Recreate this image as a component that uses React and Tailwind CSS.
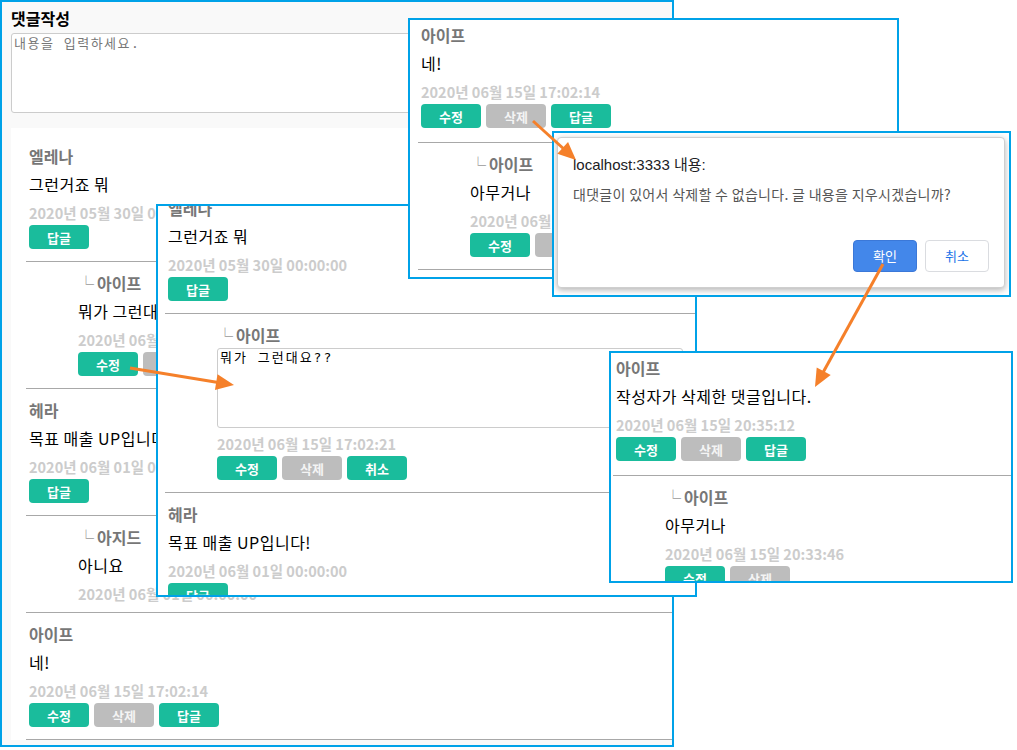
import React from 'react';

// 버튼 (수정 / 삭제 / 답글 / 취소)
const Btn = ({ label, gray }) => (
  <button
    className={`h-[24px] w-[60px] rounded-[4px] text-[13px] font-bold leading-none ${
      gray ? 'bg-[#bdbdbd] text-[#f4f4f4]' : 'bg-[#1abc9c] text-white'
    }`}
  >
    {label}
  </button>
);

// 댓글 한 줄
const Comment = ({ name, text, date, buttons = [], reply, edit, loose }) => {
  const pb = buttons.length ? (loose ? 'pb-[14px]' : 'pb-[12px]') : 'pb-[6px]';
  return (
    <div className={`border-b border-[#a8a8a8] pt-[9px] ${pb}`}>
      <div className={reply ? 'pl-[52px]' : 'pl-[3px]'}>
        <div className="h-[24px] whitespace-nowrap text-[16px] font-bold leading-[24px] text-[#777]">
          {reply && <span className="mr-[3px] font-normal text-[#9a9a9a]">└</span>}
          {name}
        </div>
        {edit ? (
          <textarea
            readOnly
            defaultValue={text}
            className="mt-[1px] block h-[80px] w-[calc(100%-12px)] resize-none rounded-[3px] border border-[#ccc] bg-white px-[2px] py-[1px] font-['DejaVu_Sans_Mono','Noto_Sans_CJK_KR',monospace] text-[13px] leading-[16px] tracking-[2px] text-black outline-none"
          />
        ) : (
          <div className="mt-[2px] whitespace-nowrap text-[16px] leading-[28px] tracking-[0.5px] text-black">{text}</div>
        )}
        <div
          className={`${edit ? 'mt-[4px]' : 'mt-[3px]'} whitespace-nowrap text-[14.5px] font-bold leading-[24px] text-[#cccccc]`}
        >
          {date}
        </div>
        {buttons.length > 0 && (
          <div className="flex gap-[5px]">
            {buttons.map((b) => (
              <Btn key={b} label={b} gray={b === '삭제'} />
            ))}
          </div>
        )}
      </div>
    </div>
  );
};

// 주황색 화살표
const Arrow = ({ x1, y1, x2, y2 }) => {
  const dx = x2 - x1;
  const dy = y2 - y1;
  const len = Math.hypot(dx, dy);
  const ux = dx / len;
  const uy = dy / len;
  const bx = x2 - ux * 18;
  const by = y2 - uy * 18;
  const nx = -uy * 8;
  const ny = ux * 8;
  return (
    <g>
      <line x1={x1} y1={y1} x2={bx + ux * 2} y2={by + uy * 2} stroke="#f5802a" strokeWidth="3" />
      <polygon points={`${x2},${y2} ${bx + nx},${by + ny} ${bx - nx},${by - ny}`} fill="#f5802a" />
    </g>
  );
};

const App = () => {
  return (
    <div className="relative h-[750px] w-[1017px] overflow-hidden bg-white font-['Noto_Sans_CJK_KR',sans-serif]">
      {/* 메인 화면 */}
      <div className="absolute left-0 top-0 h-[747px] w-[674px] overflow-hidden border-2 border-[#00a2e8] bg-[#f9f9f9]">
        <div className="px-[9px] pt-[6px]">
          <div className="text-[16px] font-bold leading-[20px] text-black">댓글작성</div>
          <textarea
            readOnly
            placeholder="내용을 입력하세요."
            className="mt-[5px] block h-[80px] w-full resize-none rounded-[3px] border border-[#ccc] bg-white px-[2px] py-[2px] font-['DejaVu_Sans_Mono','Noto_Sans_CJK_KR',monospace] text-[13px] leading-[16px] tracking-[1.5px] outline-none placeholder:text-[#777]"
          />
        </div>
        <div className="ml-[9px] mt-[15px] bg-white pl-[15px] pt-[7px]">
          <Comment name="엘레나" text="그런거죠 뭐" date="2020년 05월 30일 00:00:00" buttons={['답글']} />
          <Comment reply name="아이프" text="뭐가 그런대요??" date="2020년 06월 15일 17:02:21" buttons={['수정', '삭제']} />
          <Comment name="헤라" text="목표 매출 UP입니다!" date="2020년 06월 01일 00:00:00" buttons={['답글']} />
          <Comment reply name="아지드" text="아니요" date="2020년 06월 01일 00:00:00" />
          <Comment name="아이프" text="네!" date="2020년 06월 15일 17:02:14" buttons={['수정', '삭제', '답글']} />
        </div>
      </div>

      {/* 수정 화면 */}
      <div className="absolute left-[156px] top-[204px] h-[393px] w-[541px] overflow-hidden border-2 border-[#00a2e8] bg-white">
        <div className="mt-[-19px] pl-[7px]">
          <Comment name="엘레나" text="그런거죠 뭐" date="2020년 05월 30일 00:00:00" buttons={['답글']} />
          <Comment reply edit name="아이프" text="뭐가 그런대요??" date="2020년 06월 15일 17:02:21" buttons={['수정', '삭제', '취소']} />
          <Comment name="헤라" text="목표 매출 UP입니다!" date="2020년 06월 01일 00:00:00" buttons={['답글']} />
        </div>
      </div>

      {/* 삭제 클릭 */}
      <div className="absolute left-[408px] top-[18px] h-[261px] w-[491px] overflow-hidden border-2 border-[#00a2e8] bg-white">
        <div className="mt-[-6px] pl-[8px]">
          <Comment loose name="아이프" text="네!" date="2020년 06월 15일 17:02:14" buttons={['수정', '삭제', '답글']} />
          <Comment reply name="아이프" text="아무거나" date="2020년 06월 15일 20:33:46" buttons={['수정', '삭제']} />
        </div>
      </div>

      {/* 확인 창 */}
      <div className="absolute left-[552px] top-[131px] h-[166px] w-[459px] overflow-hidden border-2 border-[#00a2e8] bg-white">
        <div className="ml-[3px] mt-[4px] h-[151px] w-[448px] rounded-[4px] border border-[#cfcfcf] bg-white pl-[15px] pr-[15px] pt-[17px] shadow-[0_2px_6px_rgba(0,0,0,0.3)]">
          <div className="font-['Liberation_Sans','Noto_Sans_CJK_KR',sans-serif] text-[15px] leading-[20px] text-[#202124]">
            localhost:3333 내용:
          </div>
          <div className="mt-[10px] whitespace-nowrap text-[14px] leading-[18px] tracking-[0.3px] text-[#555]">
            대댓글이 있어서 삭제할 수 없습니다. 글 내용을 지우시겠습니까?
          </div>
          <div className="mt-[37px] flex justify-end gap-[8px]">
            <button className="h-[32px] w-[64px] rounded-[4px] border border-[#3b78d8] bg-[#4387ea] text-[13px] text-white">
              확인
            </button>
            <button className="h-[32px] w-[64px] rounded-[4px] border border-[#dadce0] bg-white text-[13px] text-[#1a73e8]">
              취소
            </button>
          </div>
        </div>
      </div>

      {/* 삭제 결과 */}
      <div className="absolute left-[609px] top-[351px] h-[232px] w-[404px] overflow-hidden border-2 border-[#00a2e8] bg-white">
        <div className="mt-[-6px] pl-[2px]">
          <Comment loose name="아이프" text="작성자가 삭제한 댓글입니다." date="2020년 06월 15일 20:35:12" buttons={['수정', '삭제', '답글']} />
          <Comment reply name="아이프" text="아무거나" date="2020년 06월 15일 20:33:46" buttons={['수정', '삭제']} />
        </div>
      </div>

      {/* 화살표 */}
      <svg className="pointer-events-none absolute left-0 top-0" width="1017" height="750">
        <Arrow x1={130} y1={368} x2={234} y2={385} />
        <Arrow x1={533} y1={121} x2={576} y2={160} />
        <Arrow x1={883} y1={264} x2={815} y2={387} />
      </svg>
    </div>
  );
};

export default App;
